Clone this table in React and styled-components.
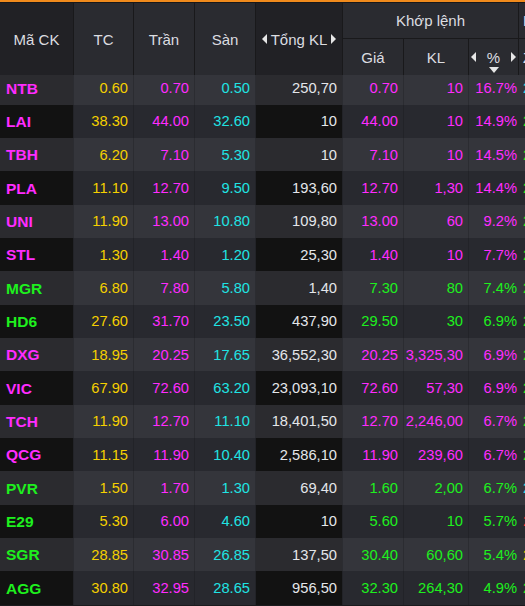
import React from "react";
import styled, { createGlobalStyle } from "styled-components";

const C = {
  ref: "#f5d000",
  ceil: "#ff2cff",
  floor: "#20e3e3",
  up: "#1ef01e",
  down: "#ff3030",
  vol: "#e4e6ea",
};

const COLS = "74px 60px 61px 61px 87px 61px 65px 50px 70px";

const rows = [
  ["NTB", "0.60", "0.70", "0.50", "250,70", "0.70", "10", "16.7%", "ceil", "floor"],
  ["LAI", "38.30", "44.00", "32.60", "10", "44.00", "10", "14.9%", "ceil", "up"],
  ["TBH", "6.20", "7.10", "5.30", "10", "7.10", "10", "14.5%", "ceil", "up"],
  ["PLA", "11.10", "12.70", "9.50", "193,60", "12.70", "1,30", "14.4%", "ceil", "up"],
  ["UNI", "11.90", "13.00", "10.80", "109,80", "13.00", "60", "9.2%", "ceil", "up"],
  ["STL", "1.30", "1.40", "1.20", "25,30", "1.40", "10", "7.7%", "ceil", "up"],
  ["MGR", "6.80", "7.80", "5.80", "1,40", "7.30", "80", "7.4%", "up", "up"],
  ["HD6", "27.60", "31.70", "23.50", "437,90", "29.50", "30", "6.9%", "up", "up"],
  ["DXG", "18.95", "20.25", "17.65", "36,552,30", "20.25", "3,325,30", "6.9%", "ceil", "up"],
  ["VIC", "67.90", "72.60", "63.20", "23,093,10", "72.60", "57,30", "6.9%", "ceil", "up"],
  ["TCH", "11.90", "12.70", "11.10", "18,401,50", "12.70", "2,246,00", "6.7%", "ceil", "up"],
  ["QCG", "11.15", "11.90", "10.40", "2,586,10", "11.90", "239,60", "6.7%", "ceil", "up"],
  ["PVR", "1.50", "1.70", "1.30", "69,40", "1.60", "2,00", "6.7%", "up", "floor"],
  ["E29", "5.30", "6.00", "4.60", "10", "5.60", "10", "5.7%", "up", "down"],
  ["SGR", "28.85", "30.85", "26.85", "137,50", "30.40", "60,60", "5.4%", "up", "ref"],
  ["AGG", "30.80", "32.95", "28.65", "956,50", "32.30", "264,30", "4.9%", "up", "up"],
];

const GlobalStyle = createGlobalStyle`
  html, body {
    margin: 0;
    padding: 0;
    background: #1b1b1e;
    overflow: hidden;
  }
  body {
    font-family: "Liberation Sans", Arial, sans-serif;
  }
`;

const Board = styled.div`
  width: 525px;
  height: 606px;
  overflow: hidden;
  border-top: 2px solid #f08a1c;
  box-sizing: border-box;
  background: #1b1b1e;
`;

const Head = styled.div`
  position: relative;
  z-index: 2;
  display: grid;
  grid-template-columns: ${COLS};
  grid-template-rows: 36px 36px;
  border-top: 1px solid #18181a;
  background: #18181b;
  height: 73px;
  box-sizing: border-box;
  border-bottom: 1px solid #1a1a1c;
`;

const HCell = styled.div`
  grid-column: ${(p) => p.$col};
  grid-row: ${(p) => p.$row};
  background: ${(p) => (p.$dark ? "#212125" : "#2a2b30")};
  border-right: 1px solid #19191b;
  border-bottom: ${(p) => (p.$under ? "1px solid #19191b" : "none")};
  display: flex;
  align-items: center;
  justify-content: ${(p) => (p.$start ? "flex-start" : "center")};
  padding-left: ${(p) => (p.$start ? "4px" : "0")};
  gap: ${(p) => p.$gap || "6px"};
  color: #dcdde0;
  font-size: 15px;
  white-space: nowrap;
  overflow: hidden;
  position: relative;
`;

const Tri = styled.span`
  width: 0;
  height: 0;
  border-top: 5px solid transparent;
  border-bottom: 5px solid transparent;
  border-${(p) => (p.$dir === "left" ? "right" : "left")}: 5px solid #e6e6e6;
`;

const SortMark = styled.span`
  position: absolute;
  bottom: 2px;
  left: 50%;
  margin-left: -5px;
  width: 0;
  height: 0;
  border-left: 5px solid transparent;
  border-right: 5px solid transparent;
  border-top: 6px solid #e6e6e6;
`;

const Body = styled.div`
  margin-top: -3.5px;
`;

const Row = styled.div`
  display: grid;
  grid-template-columns: ${COLS};
  height: 33.33px;
`;

const Cell = styled.div`
  background: ${(p) =>
    p.$deep
      ? p.$odd
        ? "#2b2b2f"
        : "#121212"
      : p.$odd
      ? "#34353b"
      : "#28292f"};
  border-right: 1px solid ${(p) => (p.$odd ? "#2b2c31" : "#222328")};
  display: flex;
  align-items: center;
  justify-content: ${(p) => (p.$left ? "flex-start" : "flex-end")};
  padding: ${(p) => (p.$left ? "0 0 0 6px" : "0 5px 0 0")};
  color: ${(p) => C[p.$tone]};
  font-size: 14.7px;
  font-weight: ${(p) => (p.$bold ? 700 : 400)};
  white-space: nowrap;
  overflow: hidden;
`;

const Symbol = styled(Cell)`
  font-size: 15.5px;
  padding-top: 1px;
`;

const PctCell = styled(Cell)`
  border-right: none;
  padding-right: 2px;
`;

const EdgeCell = styled(Cell)`
  padding-left: 4px;
`;

export default function App() {
  return (
    <>
      <GlobalStyle />
      <Board>
        <Head>
          <HCell $col="1" $row="1 / 3" $dark>
            Mã CK
          </HCell>
          <HCell $col="2" $row="1 / 3">TC</HCell>
          <HCell $col="3" $row="1 / 3">Trần</HCell>
          <HCell $col="4" $row="1 / 3">Sàn</HCell>
          <HCell $col="5" $row="1 / 3" $dark $gap="4px">
            <Tri $dir="left" />
            Tổng KL
            <Tri $dir="right" />
          </HCell>
          <HCell $col="6 / 9" $row="1" $under>
            Khớp lệnh
          </HCell>
          <HCell $col="6" $row="2">Giá</HCell>
          <HCell $col="7" $row="2">KL</HCell>
          <HCell $col="8" $row="2" $gap="11px">
            <Tri $dir="left" />
            %
            <Tri $dir="right" />
            <SortMark />
          </HCell>
          <HCell $col="9" $row="1" $under $start>
            Dư bán
          </HCell>
          <HCell $col="9" $row="2" $start>
            Z
          </HCell>
        </Head>
        <Body>
          {rows.map((r, i) => {
            const odd = i % 2 === 0;
            const [sym, tc, ceil, floor, vol, price, qty, pct, tone, edge] = r;
            return (
              <Row key={sym}>
                <Symbol $deep $odd={odd} $left $bold $tone={tone}>
                  {sym}
                </Symbol>
                <Cell $odd={odd} $tone="ref">{tc}</Cell>
                <Cell $odd={odd} $tone="ceil">{ceil}</Cell>
                <Cell $odd={odd} $tone="floor">{floor}</Cell>
                <Cell $deep $odd={odd} $tone="vol">{vol}</Cell>
                <Cell $odd={odd} $tone={tone}>{price}</Cell>
                <Cell $odd={odd} $tone={tone}>{qty}</Cell>
                <PctCell $odd={odd} $tone={tone}>{pct}</PctCell>
                <EdgeCell $odd={odd} $left $tone={edge}>
                  2
                </EdgeCell>
              </Row>
            );
          })}
        </Body>
      </Board>
    </>
  );
}
